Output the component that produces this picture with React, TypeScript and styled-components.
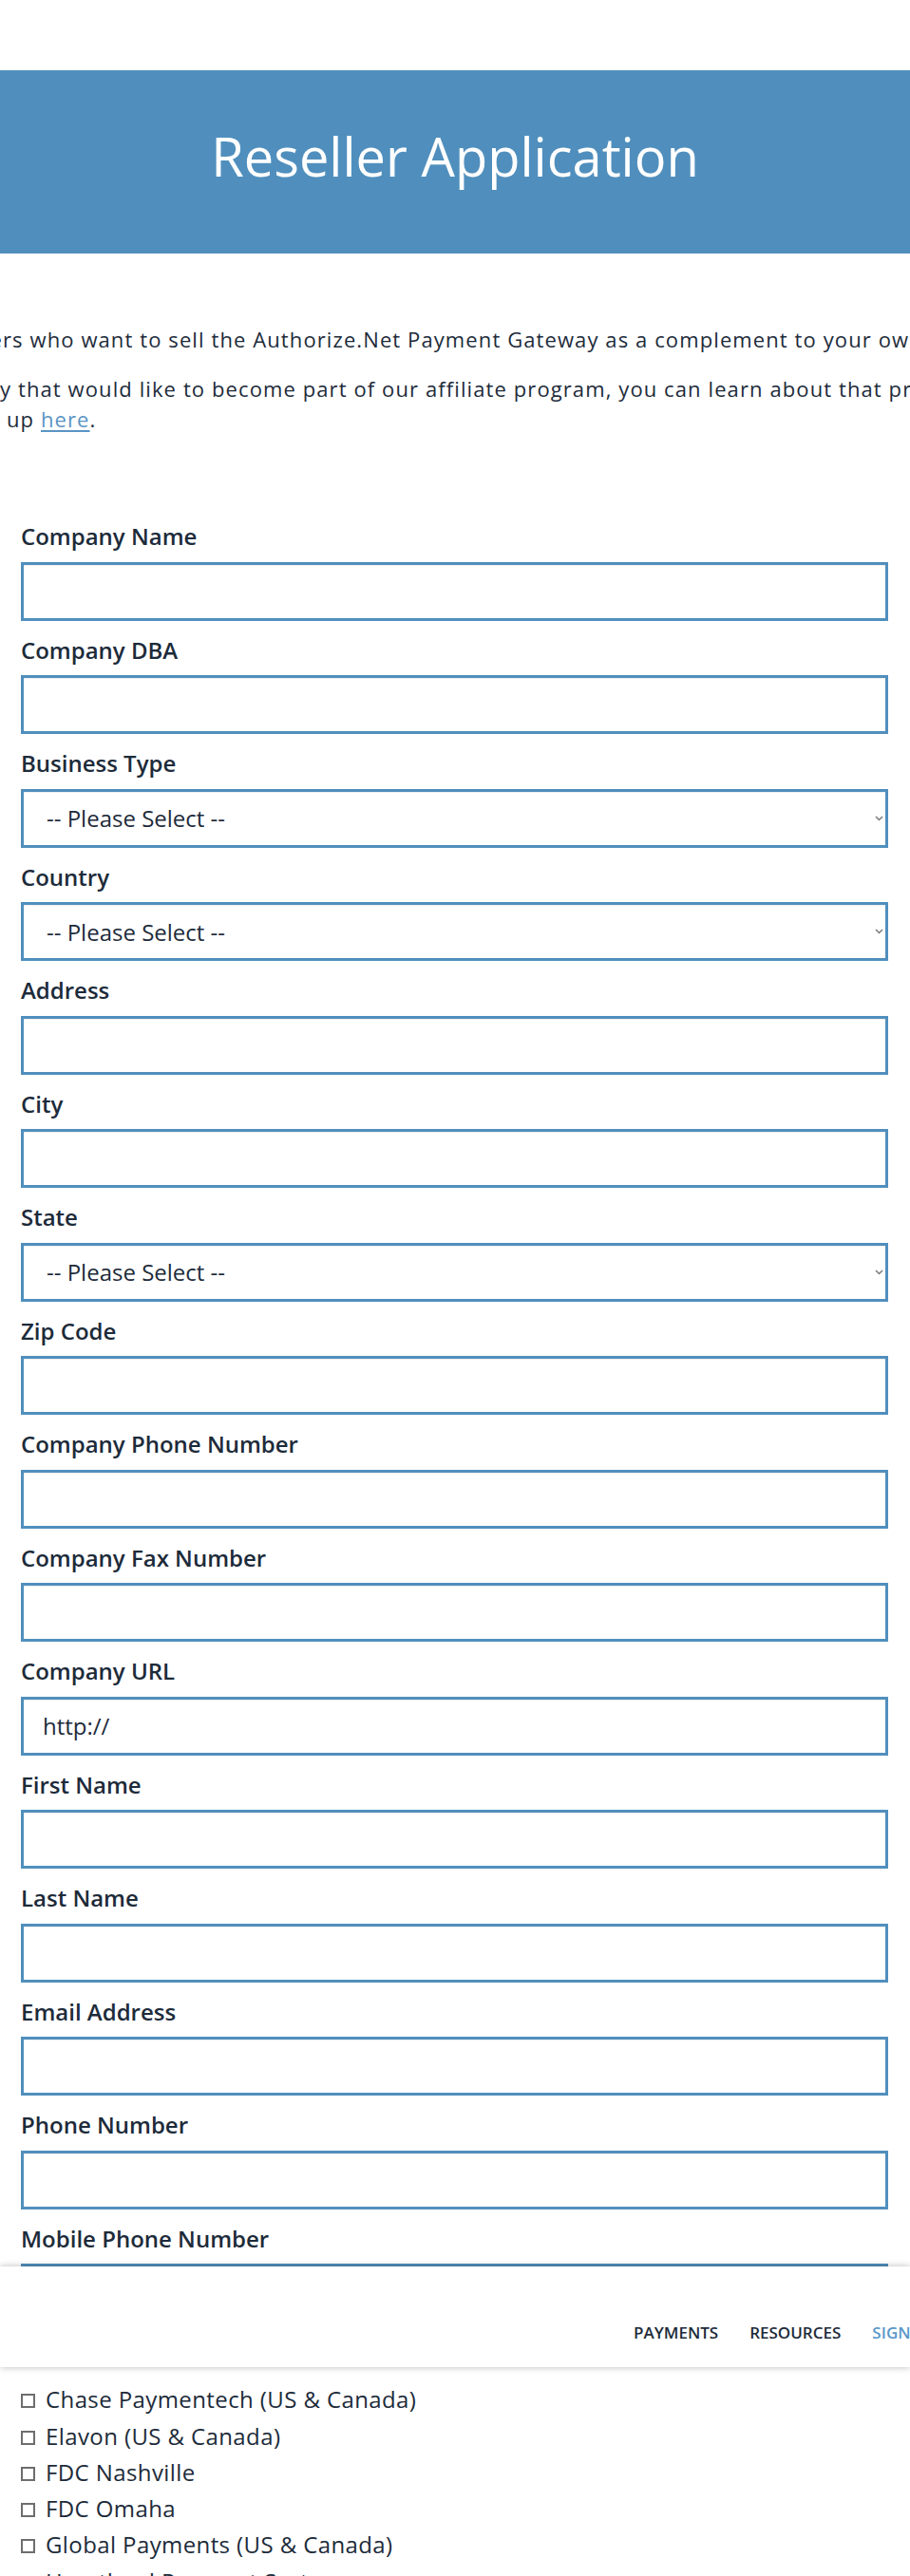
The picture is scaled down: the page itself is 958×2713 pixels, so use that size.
import React from "react";
import styled, { createGlobalStyle } from "styled-components";

const GlobalStyle = createGlobalStyle`
  html, body {
    margin: 0;
    padding: 0;
    background: #ffffff;
    overflow-x: hidden;
  }
  body {
    font-family: "Open Sans", "Noto Sans", "Liberation Sans", sans-serif;
    color: #1d2b3a;
  }
  * { box-sizing: border-box; }
`;

const Page = styled.div`
  position: relative;
  width: 958px;
  min-height: 2713px;
  overflow: hidden;
  background: #ffffff;
`;

const TopSpace = styled.div`
  height: 74px;
`;

const Hero = styled.header`
  height: 193px;
  background: #508fbd;
  display: flex;
  align-items: center;
  justify-content: center;
  padding-bottom: 14px;
`;

const Title = styled.h1`
  margin: 0;
  font-family: "Open Sans", "Noto Sans", sans-serif;
  font-weight: 400;
  font-size: 56px;
  line-height: normal;
  color: #ffffff;
`;

const Intro = styled.section`
  padding-top: 74px;
  font-size: 22px;
  letter-spacing: 1.1px;
  line-height: 32px;
  color: #1d2b3a;
`;

const Paragraph = styled.p`
  margin: 0 0 20px;
`;

const CutLine = styled.span<{ $offset: number }>`
  position: relative;
  display: block;
  white-space: nowrap;
  padding-left: ${(p) => p.$offset}px;
`;

const OffLeft = styled.span`
  position: absolute;
  right: calc(100% - var(--off, 0px));
  top: 0;
  white-space: nowrap;
`;

const InlineLink = styled.a`
  color: #5a94c4;
  text-decoration: underline;
  text-underline-offset: 3px;
`;

const Form = styled.form`
  padding: 73.3px 23px 0 22px;
`;

const Field = styled.div`
  margin-bottom: 16px;
`;

const Label = styled.label`
  display: block;
  font-size: 24px;
  font-weight: 600;
  line-height: 30px;
  margin-bottom: 11.5px;
  color: #1d2b3a;
`;

const SectionLabel = styled(Label)`
  margin-bottom: 16px;
`;

const TextInput = styled.input`
  display: block;
  width: 100%;
  height: 62px;
  border: 3px solid #508fbd;
  border-radius: 0;
  box-shadow: inset 0 1px 1px rgba(0, 0, 0, 0.075);
  padding: 0 20px;
  font-family: "Open Sans", "Noto Sans", sans-serif;
  font-size: 24px;
  color: #1d2b3a;
  background: #ffffff;
  outline: none;
`;

const SelectWrap = styled.div`
  position: relative;
`;

const Select = styled.select`
  display: block;
  width: 100%;
  height: 62px;
  border: 3px solid #508fbd;
  border-radius: 0;
  box-shadow: inset 0 1px 1px rgba(0, 0, 0, 0.075);
  padding: 0 30px 0 24px;
  appearance: none;
  -webkit-appearance: none;
  font-family: "Open Sans", "Noto Sans", sans-serif;
  font-size: 24px;
  color: #1d2b3a;
  background: #ffffff;
  outline: none;
`;

const Chevron = styled.svg`
  position: absolute;
  right: 5px;
  top: 28px;
  width: 9px;
  height: 6px;
  pointer-events: none;
`;

const CheckList = styled.ul`
  list-style: none;
  margin: 0;
  padding: 0;
`;

const CheckItem = styled.li`
  font-size: 24px;
  letter-spacing: 0.4px;
  line-height: 38.25px;
  white-space: nowrap;
  color: #1d2b3a;
`;

const Box = styled.span`
  display: inline-block;
  width: 15px;
  height: 15px;
  border: 2px solid #6e6e6e;
  margin-right: 11px;
  vertical-align: baseline;
  background: #ffffff;
`;

const StickyNav = styled.nav`
  position: absolute;
  top: 2387px;
  left: 0;
  right: 0;
  height: 106px;
  background: #ffffff;
  box-shadow: 0 0 7px rgba(0, 0, 0, 0.28);
  display: flex;
  align-items: flex-end;
  padding: 0 0 25px 667px;
  gap: 33px;
  z-index: 5;
`;

const NavItem = styled.a<{ $accent?: boolean }>`
  font-size: 17px;
  font-weight: 600;
  text-transform: uppercase;
  white-space: nowrap;
  text-decoration: none;
  color: ${(p) => (p.$accent ? "#5b97c9" : "#1d2b3a")};
`;

type FieldDef = { label: string; select?: boolean; value?: string };

const fields: FieldDef[] = [
  { label: "Company Name" },
  { label: "Company DBA" },
  { label: "Business Type", select: true },
  { label: "Country", select: true },
  { label: "Address" },
  { label: "City" },
  { label: "State", select: true },
  { label: "Zip Code" },
  { label: "Company Phone Number" },
  { label: "Company Fax Number" },
  { label: "Company URL", value: "http://" },
  { label: "First Name" },
  { label: "Last Name" },
  { label: "Email Address" },
  { label: "Phone Number" },
  { label: "Mobile Phone Number" },
];

const processors = [
  "Chase Paymentech (US & Canada)",
  "Elavon (US & Canada)",
  "FDC Nashville",
  "FDC Omaha",
  "Global Payments (US & Canada)",
  "Heartland Payment Systems",
  "TSYS (US & Canada)",
];

function Line({ hidden, offset, children }: { hidden: string; offset: number; children: React.ReactNode }) {
  return (
    <CutLine $offset={offset} style={{ ["--off" as string]: `${offset}px` }}>
      <OffLeft aria-hidden="true">{hidden}</OffLeft>
      {children}
    </CutLine>
  );
}

export default function App() {
  return (
    <>
      <GlobalStyle />
      <Page>
        <TopSpace />
        <Hero>
          <Title>Reseller Application</Title>
        </Hero>
        <Intro>
          <Paragraph>
            <Line hidden="The Authorize.Net Reseller Program is designed for reselle" offset={3}>
              rs who want to sell the Authorize.Net Payment Gateway as a complement to your own products and services.
            </Line>
          </Paragraph>
          <Paragraph>
            <Line hidden="If you are a compan" offset={0}>
              y that would like to become part of our affiliate program, you can learn about that program and
            </Line>
            <Line hidden={"sign\u00a0\u00a0"} offset={7}>
              up <InlineLink href="#">here</InlineLink>.
            </Line>
          </Paragraph>
        </Intro>
        <Form onSubmit={(e) => e.preventDefault()}>
          {fields.map((f, i) => (
            <Field key={f.label}>
              <Label htmlFor={`f${i}`}>{f.label}</Label>
              {f.select ? (
                <SelectWrap>
                  <Select id={`f${i}`} defaultValue="">
                    <option value="">-- Please Select --</option>
                  </Select>
                  <Chevron viewBox="0 0 9 6" aria-hidden="true">
                    <path d="M1 1 L4.5 4.5 L8 1" fill="none" stroke="#7a7a7a" strokeWidth="1.5" />
                  </Chevron>
                </SelectWrap>
              ) : (
                <TextInput id={`f${i}`} type="text" defaultValue={f.value ?? ""} />
              )}
            </Field>
          ))}
          <SectionLabel as="div">Processing Platforms Supported (check all that apply)</SectionLabel>
          <CheckList>
            {processors.map((p) => (
              <CheckItem key={p}>
                <Box />
                {p}
              </CheckItem>
            ))}
          </CheckList>
        </Form>
        <StickyNav>
          <NavItem href="#">Payments</NavItem>
          <NavItem href="#">Resources</NavItem>
          <NavItem href="#" $accent>
            Sign Up
          </NavItem>
        </StickyNav>
      </Page>
    </>
  );
}
